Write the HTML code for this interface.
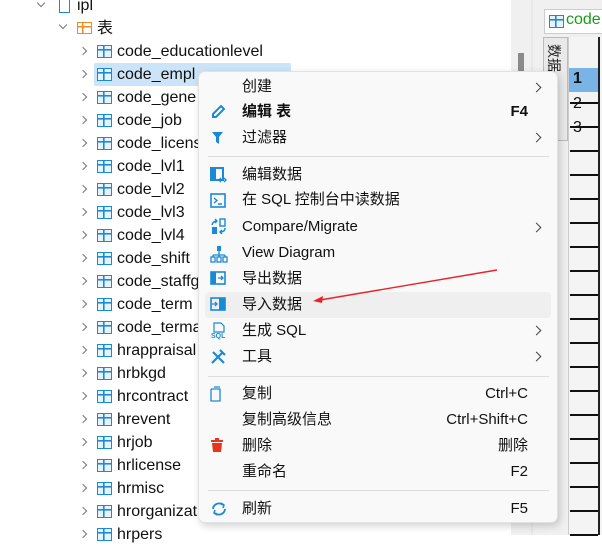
<!DOCTYPE html>
<html><head><meta charset="utf-8"><style>
*{margin:0;padding:0;box-sizing:border-box}
body{width:602px;height:535px;overflow:hidden;background:#fff;font-family:"Liberation Sans","Noto Sans CJK SC",sans-serif;position:relative;color:#111}
.r{position:absolute;font-size:16px;line-height:23px;height:23px;white-space:nowrap}
.chev{position:absolute;width:6px;height:6px;border-right:1.3px solid #777;border-bottom:1.3px solid #777}
.ti{position:absolute;width:15px;height:13px;border:1.6px solid #1a8ad4;background:linear-gradient(#1a8ad4 0 0) 0 3px/100% 1.6px no-repeat,linear-gradient(#1a8ad4 0 0) 5px 0/1.6px 100% no-repeat,#e6f3fb}
.m{position:absolute;left:242px;font-size:15px;line-height:20px;white-space:nowrap;color:#111}
.k{position:absolute;right:74px;font-size:15px;line-height:20px;color:#111}
.ar{position:absolute;left:533px;width:7px;height:7px;border-right:1.4px solid #444;border-top:1.4px solid #444;transform:rotate(45deg)}
.sep{position:absolute;left:208px;width:341px;height:1px;background:#ddd}
.ic{position:absolute;left:210px}
.hl{position:absolute;left:570px;width:28px;height:1.5px;background:#111}
</style></head><body>
<div class="chev" style="left:38px;top:0px;transform:rotate(45deg)"></div>
<div style="position:absolute;left:59px;top:0;width:11px;height:13px;border:1.5px solid #1a8ad4;border-top:none"></div>
<div class="r" style="left:77px;top:-6px">ipl</div>
<div class="chev" style="left:60px;top:22px;transform:rotate(45deg)"></div>
<div style="position:absolute;left:77px;top:22px;width:15px;height:12px;border:1.5px solid #f08a24;background:linear-gradient(#f08a24 0 0) 0 3px/100% 1.5px no-repeat,linear-gradient(#f08a24 0 0) 4px 0/1.5px 100% no-repeat"></div>
<div class="r" style="left:97px;top:17px">表</div>
<div style="position:absolute;left:94px;top:63px;width:197px;height:23px;background:#cce4f7;border-radius:2px"></div>
<div id="tree"></div>
<div style="position:absolute;left:511px;top:0;width:20px;height:535px;background:#f0f0f0"></div>
<div style="position:absolute;left:518px;top:53px;width:6px;height:18px;background:#8a8a8a"></div>
<div style="position:absolute;left:531px;top:0;width:2px;height:535px;background:#e8e8e8"></div>
<div style="position:absolute;left:533px;top:0;width:69px;height:535px;background:#f0f0f0"></div>
<div style="position:absolute;left:569px;top:37px;width:33px;height:498px;background:#f4f4f4"></div>
<div style="position:absolute;left:544px;top:9px;width:60px;height:25px;background:#fff;border:1px solid #ccc"></div>
<div class="ti" style="left:549px;top:15px"></div>
<div style="position:absolute;left:566px;top:11px;font-size:16px;color:#1a9a1a">code</div>
<div style="position:absolute;left:543px;top:37px;width:25px;height:104px;border:1px solid #bbb;background:#e9e9e9;font-size:14px;writing-mode:vertical-rl;text-orientation:sideways;padding-top:6px;padding-right:3px;color:#222">数据</div>
<div style="position:absolute;left:569px;top:68px;width:30px;height:24px;background:#7ab3e6"></div>
<div style="position:absolute;left:573px;top:70px;font-size:16px;font-weight:bold">1</div>
<div style="position:absolute;left:573px;top:95px;font-size:16px">2</div>
<div style="position:absolute;left:573px;top:119px;font-size:16px">3</div>
<div style="position:absolute;left:598px;top:37px;width:1.5px;height:498px;background:#222"></div>
<div style="position:absolute;left:568px;top:37px;width:1px;height:498px;background:#ccc"></div>
<div id="hl"></div>
<div style="position:absolute;left:198px;top:71px;width:360px;height:452px;background:#f9f9f9;border:1px solid #e2e2e2;border-radius:7px;box-shadow:2px 3px 8px rgba(0,0,0,.18)"></div>
<div style="position:absolute;left:205px;top:292px;width:346px;height:26px;background:#efefef;border-radius:4px"></div>
<div class="m" style="top:77px">创建</div><div class="ar" style="top:84px"></div>
<svg class="ic" style="top:104px" width="16" height="16"><path d="M3 13 L3 10 L11 2 L14 5 L6 13 Z" fill="none" stroke="#1a8ad4" stroke-width="2"/></svg>
<div class="m" style="top:102px;font-weight:bold">编辑 表</div><div class="k" style="top:102px;font-weight:bold">F4</div>
<svg class="ic" style="top:130px" width="16" height="16"><path d="M2 2 H13 L9 7 V14 L6 12 V7 Z" fill="#1a8ad4"/></svg>
<div class="m" style="top:128px">过滤器</div><div class="ar" style="top:134px"></div>
<div class="sep" style="top:156px"></div>
<svg class="ic" style="top:167px" width="18" height="16"><rect x="1" y="1" width="12" height="12" fill="none" stroke="#1a8ad4" stroke-width="2"/><rect x="1" y="1" width="5" height="12" fill="#1a8ad4"/><path d="M11 11l-2 2 2 2M14 11l2 2-2 2" stroke="#1a8ad4" fill="none" stroke-width="1.4"/></svg>
<div class="m" style="top:165px">编辑数据</div>
<svg class="ic" style="top:193px" width="16" height="16"><rect x="1" y="1" width="14" height="13" fill="none" stroke="#1a8ad4" stroke-width="1.6"/><path d="M4 5l3 2.5-3 2.5M8 11h4" stroke="#1a8ad4" fill="none" stroke-width="1.4"/></svg>
<div class="m" style="top:190px">在 SQL 控制台中读数据</div>
<svg class="ic" style="top:218px" width="18" height="18"><rect x="10" y="1" width="5" height="7" fill="none" stroke="#1a8ad4" stroke-width="1.4"/><rect x="2" y="9" width="5" height="7" fill="#1a8ad4"/><path d="M2 7 Q3 3 7 3M5 1l2 2-2 2M15 10 Q15 14 10 14M12 12l-2 2 2 2" stroke="#1a8ad4" fill="none" stroke-width="1.4"/></svg>
<div class="m" style="top:217px">Compare/Migrate</div><div class="ar" style="top:224px"></div>
<svg class="ic" style="top:245px" width="18" height="18"><rect x="7" y="1" width="4" height="5" fill="#1a8ad4"/><path d="M9 6v4M3 10h12M3 10v2M9 10v2M15 10v2" stroke="#1a8ad4" fill="none" stroke-width="1.3"/><rect x="1" y="12" width="4" height="5" fill="none" stroke="#1a8ad4" stroke-width="1.3"/><rect x="7" y="12" width="4" height="5" fill="none" stroke="#1a8ad4" stroke-width="1.3"/><rect x="13" y="12" width="4" height="5" fill="none" stroke="#1a8ad4" stroke-width="1.3"/></svg>
<div class="m" style="top:243px">View Diagram</div>
<svg class="ic" style="top:271px" width="16" height="16"><rect x="1" y="1" width="14" height="12" fill="none" stroke="#1a8ad4" stroke-width="1.6"/><rect x="1" y="1" width="5" height="12" fill="#1a8ad4"/><path d="M8 7h5M11 5l2 2-2 2" stroke="#1a8ad4" fill="none" stroke-width="1.3"/></svg>
<div class="m" style="top:269px">导出数据</div>
<svg class="ic" style="top:297px" width="16" height="16"><rect x="1" y="1" width="14" height="12" fill="none" stroke="#1a8ad4" stroke-width="1.6"/><rect x="9" y="1" width="6" height="12" fill="#1a8ad4"/><path d="M2 7h5M5 5l2 2-2 2" stroke="#1a8ad4" fill="none" stroke-width="1.3"/></svg>
<div class="m" style="top:295px">导入数据</div>
<svg class="ic" style="top:322px" width="18" height="18"><path d="M4 1h7l3 3v6H4z" fill="none" stroke="#1a8ad4" stroke-width="1.2"/><text x="1" y="16" font-size="7" font-family="Liberation Sans" fill="#1a8ad4" font-weight="bold">SQL</text></svg>
<div class="m" style="top:321px">生成 SQL</div><div class="ar" style="top:327px"></div>
<svg class="ic" style="top:349px" width="16" height="16"><path d="M2 14L13 3M3 3l11 11M10 1l5 5" stroke="#1a8ad4" fill="none" stroke-width="2.2"/></svg>
<div class="m" style="top:347px">工具</div><div class="ar" style="top:353px"></div>
<div class="sep" style="top:376px"></div>
<svg class="ic" style="top:386px" width="16" height="16"><path d="M4 1h6M1 3v12h9V3H1" stroke="#1a8ad4" fill="none" stroke-width="1.3"/></svg>
<div class="m" style="top:384px">复制</div><div class="k" style="top:384px">Ctrl+C</div>
<div class="m" style="top:410px">复制高级信息</div><div class="k" style="top:410px">Ctrl+Shift+C</div>
<svg class="ic" style="top:438px" width="16" height="16"><rect x="1" y="2" width="12" height="2" fill="#e8341c"/><rect x="5" y="0" width="4" height="2" fill="#e8341c"/><path d="M2 5h10l-1 9H3z" fill="#e8341c"/></svg>
<div class="m" style="top:436px">删除</div><div class="k" style="top:436px">删除</div>
<div class="m" style="top:462px">重命名</div><div class="k" style="top:462px">F2</div>
<div class="sep" style="top:490px"></div>
<svg class="ic" style="top:501px" width="18" height="16"><path d="M3 8a6 6 0 0 1 10-4M15 8a6 6 0 0 1-10 4" stroke="#1a8ad4" fill="none" stroke-width="1.8"/><path d="M11 2l3 2-1 3M7 14l-3-2 1-3" stroke="#1a8ad4" fill="none" stroke-width="1.5"/></svg>
<div class="m" style="top:499px">刷新</div><div class="k" style="top:499px">F5</div>
<svg style="position:absolute;left:0;top:0" width="602" height="535"><path d="M497 270 L320 300" stroke="#e5252a" stroke-width="1.4"/><path d="M313 301 L323 296 L322 303 Z" fill="#e5252a"/></svg>
<script>
var n=["code_educationlevel","code_empl","code_gene","code_job","code_licens","code_lvl1","code_lvl2","code_lvl3","code_lvl4","code_shift","code_staffg","code_term","code_terma","hrappraisal","hrbkgd","hrcontract","hrevent","hrjob","hrlicense","hrmisc","hrorganizat","hrpers"];
var h="";for(var i=0;i<n.length;i++){var y=40+i*23;h+='<div class="chev" style="left:80px;top:'+(y+8)+'px;transform:rotate(-45deg)"></div><div class="ti" style="left:97px;top:'+(y+5)+'px"></div><div class="r" style="left:117px;top:'+y+'px">'+n[i]+'</div>';}
document.getElementById("tree").outerHTML=h;
var g="";for(var y=102;y<535;y+=24){g+='<div class="hl" style="top:'+y+'px"></div>';}
document.getElementById("hl").outerHTML=g;
</script>
</body></html>
